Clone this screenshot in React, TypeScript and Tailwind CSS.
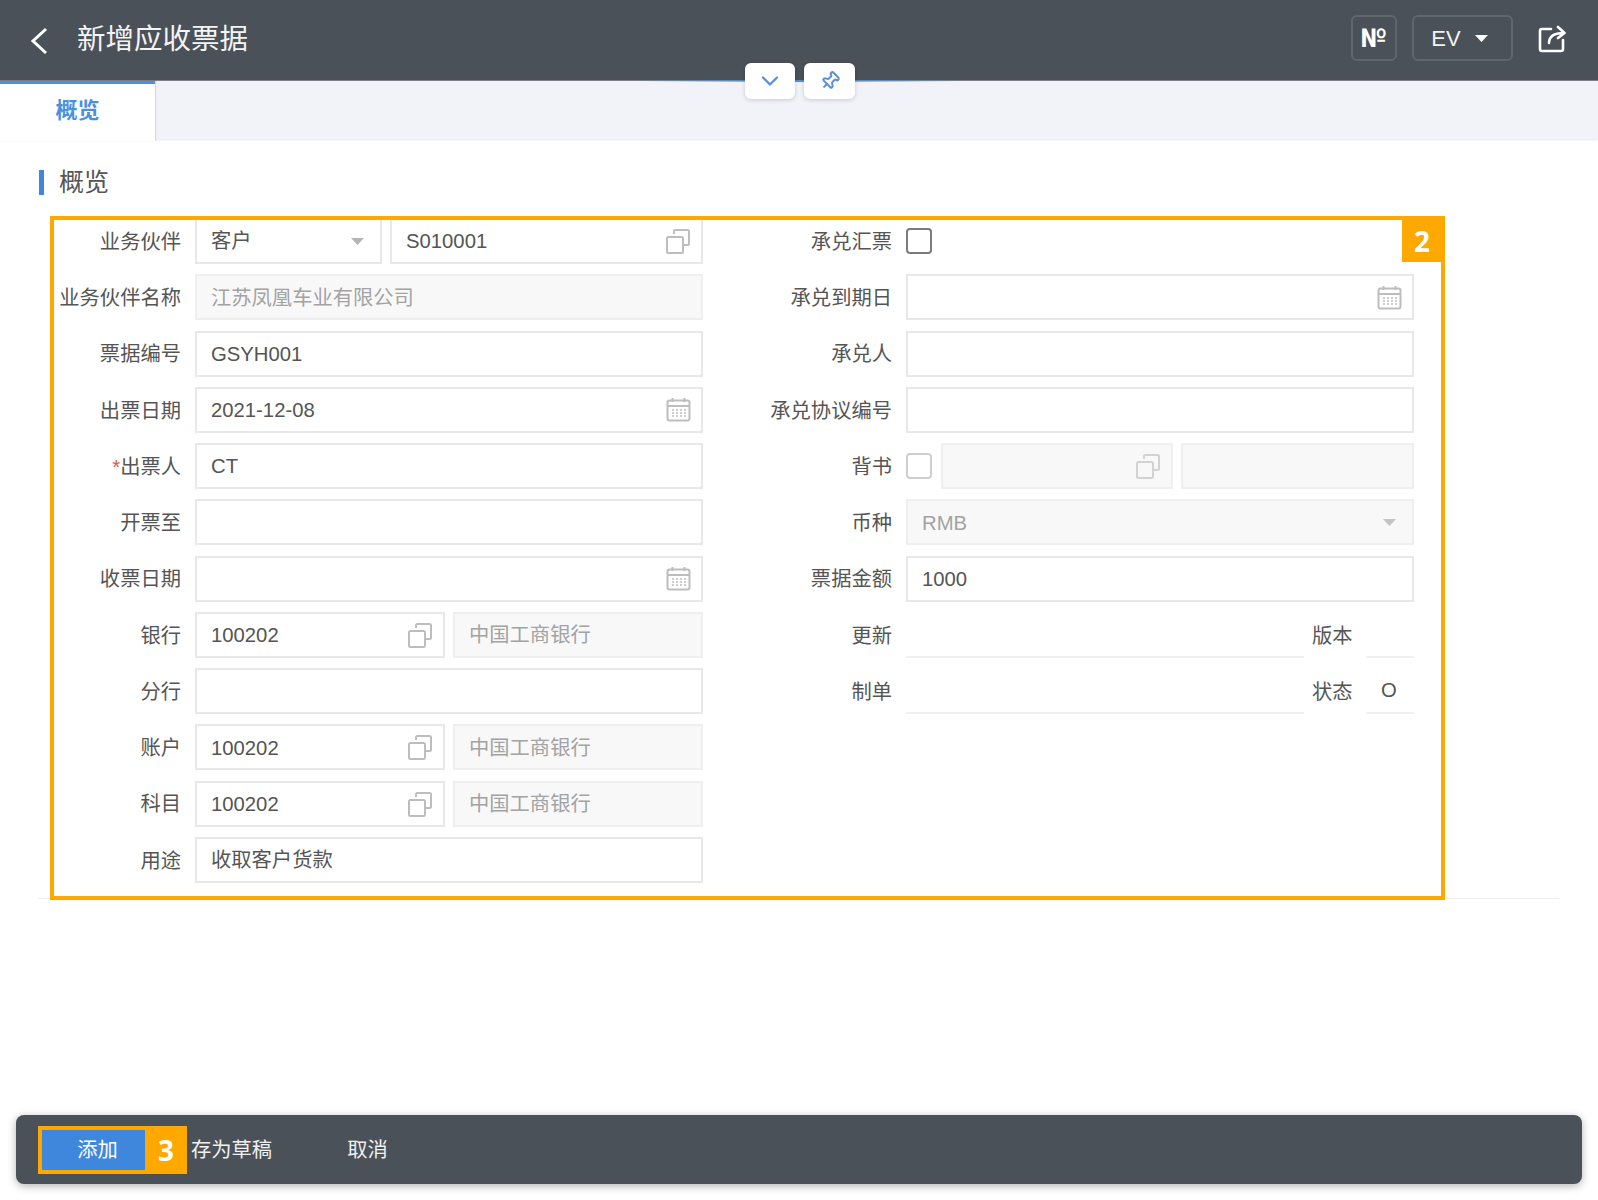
import React from "react";
import { ChevronDown, Pin } from "lucide-react";

const CopyIcon = ({ light }: { light?: boolean }) => (
  <svg width="26" height="26" viewBox="0 0 26 26" fill="none" stroke={light ? "#d2d2d2" : "#bdbdbd"} strokeWidth="2">
    <path d="M9 6V3.500A1.500 1.500 0 0 1 10.500 2h12A1.500 1.500 0 0 1 24 3.500v12a1.500 1.500 0 0 1-1.500 1.500H18" />
    <rect x="2" y="9" width="16" height="16" rx="1.500" />
  </svg>
);

const CalendarIcon = () => (
  <svg width="25" height="25" viewBox="0 0 25 25" fill="none" stroke="#bdbdbd" strokeWidth="2">
    <rect x="1.500" y="3.500" width="22" height="20" rx="2" />
    <path d="M1.500 9h22M6.500 1v4M18.500 1v4" />
    <path d="M6 13h2m2 0h2m2 0h2m2 0h2M6 16h2m2 0h2m2 0h2m2 0h2M6 19h2m2 0h2m2 0h2m2 0h2" strokeWidth="1.600" />
  </svg>
);

const Caret = ({ color = "#b5b5b5" }: { color?: string }) => (
  <svg className="mr-[6px]" width="13" height="7" viewBox="0 0 13 7">
    <path d="M0 0h13L6.500 7z" fill={color} />
  </svg>
);

const Row = ({ label, star, children }: { label: string; star?: boolean; children?: React.ReactNode }) => (
  <div className="flex h-[46px] items-center gap-[14px]">
    <div className="w-[143px] shrink-0 pt-[2px] text-right text-[20.300px] text-[#555555]">
      {star && <span className="text-[#e0544a]">*</span>}
      {label}
    </div>
    <div className="flex h-full min-w-0 flex-1 items-center gap-2">{children}</div>
  </div>
);

const Field = ({
  value,
  disabled,
  icon,
  className = "flex-1",
}: {
  value?: string;
  disabled?: boolean;
  icon?: React.ReactNode;
  className?: string;
}) => (
  <div
    className={`flex h-full min-w-0 items-center justify-between border-2 pl-[14px] pr-[10px] text-[20.300px] ${className} ${
      disabled ? "border-[#efefef] bg-[#f8f8f8] text-[#a3a3a3]" : "border-[#e8e8e8] bg-white text-[#555555]"
    }`}
  >
    <span className="truncate pt-px">{value}</span>
    {icon}
  </div>
);

const Underline = ({ value, className }: { value?: string; className: string }) => (
  <div className={`flex h-full items-center border-b-2 border-[#f0f0f0] text-[20.300px] text-[#555555] ${className}`}>{value}</div>
);

const Badge = ({ n, className }: { n: string; className: string }) => (
  <div className={`flex items-center justify-center bg-[#ffa800] font-['Open_Sans'] text-[28px] font-bold text-white ${className}`}>{n}</div>
);

export default function App() {
  return (
    <div
      className="relative flex h-[1200px] w-full flex-col overflow-hidden bg-white"
      style={{ fontFamily: "'Liberation Sans', 'Noto Sans CJK SC', sans-serif" }}
    >
      <header className="flex h-[81px] shrink-0 items-center justify-between border-b border-[#7d8186] bg-[#4a5158] pl-[30px] pr-[32px]">
        <div className="flex items-center gap-[29px]">
          <svg width="18" height="28" viewBox="0 0 18 28" fill="none" stroke="#ffffff" strokeWidth="3" className="mt-[2px]">
            <path d="M16 2 3 14l13 12" />
          </svg>
          <h1 className="mb-[2px] text-[28.500px] font-normal text-[#f4f4f4]">新增应收票据</h1>
        </div>
        <div className="mb-[4px] flex items-center">
          <div className="flex h-[46px] w-[46px] items-center justify-center rounded-md border-2 border-[#5f666e] font-['Roboto'] text-[26px] font-bold text-white">
            №
          </div>
          <div className="ml-[15px] flex h-[46px] w-[101px] items-center justify-center gap-[14px] rounded-md border-2 border-[#5f666e] text-[22px] text-[#f2f2f2]">
            EV
            <Caret color="#ffffff" />
          </div>
          <svg className="ml-[25px] mt-[2px]" width="28" height="28" viewBox="0 0 28 28" fill="none" stroke="#ffffff" strokeWidth="2.600" strokeLinecap="round" strokeLinejoin="round">
            <path d="M13 4H4a2 2 0 0 0-2 2v18a2 2 0 0 0 2 2h19a2 2 0 0 0 2-2V15" />
            <path d="M11 18c0-6 4-10 15-10M20 2l6.500 6-6.500 5" />
          </svg>
        </div>
      </header>

      <div className="absolute left-[640px] top-[80px] h-[2px] w-[320px] bg-gradient-to-r from-transparent via-[#4a90e2] to-transparent" />
      <div className="absolute left-[745px] top-[63px] flex gap-[9px]">
        <div className="flex h-[36px] w-[50px] items-center justify-center rounded-md bg-white shadow-[0_1px_4px_rgba(0,0,0,0.18)]">
          <ChevronDown size={28} strokeWidth={2} className="text-[#5b8fd9]" />
        </div>
        <div className="flex h-[36px] w-[51px] items-center justify-center rounded-md bg-white shadow-[0_1px_4px_rgba(0,0,0,0.18)]">
          <Pin size={20} strokeWidth={2.400} className="rotate-45 text-[#5b8fd9]" />
        </div>
      </div>

      <nav className="flex h-[58px] shrink-0 items-start bg-[#f2f3f8] shadow-[0_1px_2px_rgba(0,0,0,0.1)]">
        <div className="relative flex h-[60px] w-[155px] items-center justify-center border-t-[3px] border-[#4a90e2] bg-white pb-[5px] text-[22px] font-bold text-[#4a8fe0] shadow-[1px_0_1px_rgba(0,0,0,0.1)]">
          概览
        </div>
      </nav>

      <main className="px-[39px]">
        <div className="mt-[31px] flex h-[25px] items-center gap-[15px] text-[25px] text-[#555555]">
          <span className="h-full w-[5px] bg-[#3f87dd]" />
          概览
        </div>
        <div className="-ml-px mt-[23px] flex h-[681px] gap-[46px] border-b border-[#eeeeee]">
          <div className="flex w-[665px] flex-col gap-y-[10.250px]">
            <Row label="业务伙伴">
              <Field value="客户" className="w-[187px] shrink-0" icon={<Caret />} />
              <Field value="S010001" icon={<CopyIcon />} />
            </Row>
            <Row label="业务伙伴名称"><Field value="江苏凤凰车业有限公司" disabled /></Row>
            <Row label="票据编号"><Field value="GSYH001" /></Row>
            <Row label="出票日期"><Field value="2021-12-08" icon={<CalendarIcon />} /></Row>
            <Row label="出票人" star><Field value="CT" /></Row>
            <Row label="开票至"><Field /></Row>
            <Row label="收票日期"><Field icon={<CalendarIcon />} /></Row>
            <Row label="银行">
              <Field value="100202" className="w-[250px] shrink-0" icon={<CopyIcon />} />
              <Field value="中国工商银行" disabled />
            </Row>
            <Row label="分行"><Field /></Row>
            <Row label="账户">
              <Field value="100202" className="w-[250px] shrink-0" icon={<CopyIcon />} />
              <Field value="中国工商银行" disabled />
            </Row>
            <Row label="科目">
              <Field value="100202" className="w-[250px] shrink-0" icon={<CopyIcon />} />
              <Field value="中国工商银行" disabled />
            </Row>
            <Row label="用途"><Field value="收取客户货款" /></Row>
          </div>

          <div className="flex w-[665px] flex-col gap-y-[10.250px]">
            <Row label="承兑汇票">
              <div className="h-[26px] w-[26px] rounded-[4px] border-2 border-[#7b7b7b]" />
            </Row>
            <Row label="承兑到期日"><Field icon={<CalendarIcon />} /></Row>
            <Row label="承兑人"><Field /></Row>
            <Row label="承兑协议编号"><Field /></Row>
            <Row label="背书">
              <div className="mr-px h-[26px] w-[26px] shrink-0 rounded-[4px] border-2 border-[#cfcfcf]" />
              <Field disabled className="w-[232px] shrink-0" icon={<CopyIcon light />} />
              <Field disabled />
            </Row>
            <Row label="币种"><Field value="RMB" disabled icon={<Caret color="#c4c4c4" />} /></Row>
            <Row label="票据金额"><Field value="1000" /></Row>
            <Row label="更新">
              <Underline className="w-[398px] shrink-0" />
              <div className="w-[41px] shrink-0 whitespace-nowrap pt-[2px] text-[20.300px] text-[#555555]">版本</div>
              <Underline className="ml-[5px] flex-1" />
            </Row>
            <Row label="制单">
              <Underline className="w-[398px] shrink-0" />
              <div className="w-[41px] shrink-0 whitespace-nowrap pt-[2px] text-[20.300px] text-[#555555]">状态</div>
              <Underline className="ml-[5px] flex-1 pl-[15px]" value="O" />
            </Row>
          </div>
        </div>
      </main>

      {/* annotation frame sits on top of the form */}
      <div className="absolute left-[50px] top-[216px] h-[684px] w-[1395px] border-4 border-[#ffa800]">
        <Badge n="2" className="absolute right-[-1px] top-0 h-[42px] w-[40px]" />
      </div>

      <footer className="mx-[16px] mb-[16px] mt-auto flex h-[69px] shrink-0 items-center rounded-lg bg-[#4a5158] pl-[22px] text-[20.300px] text-[#f0f0f0] shadow-[0_2px_8px_rgba(0,0,0,0.3)]">
        <div className="flex h-[48px]">
          <div className="flex w-[107px] items-center justify-center border-4 border-r-0 border-[#ffa800] bg-[#3f87dd] pl-2 pt-[2px] text-white">添加</div>
          <Badge n="3" className="w-[42px]" />
        </div>
        <span className="ml-[4px] pt-[2px]">存为草稿</span>
        <span className="ml-[75px] pt-[2px]">取消</span>
      </footer>
    </div>
  );
}
